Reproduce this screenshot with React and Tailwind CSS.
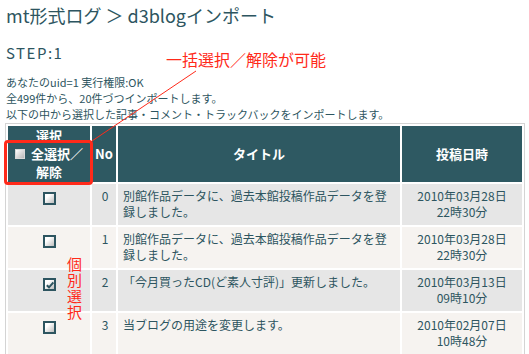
import React from "react";

const C = "text-[#2d5560]";

function Box({ checked }) {
  return (
    <span className="relative inline-block w-[13px] h-[13px] border-2 border-[#2d5560] bg-linear-to-br from-white from-30% to-[#bdbdbd] align-top">
      {checked && (
        <svg className="absolute left-[1px] top-[1px]" width="8" height="8" viewBox="0 0 8 8">
          <path d="M0.8 4.2 L3 6.3 L7.4 1.4" stroke="#2d5560" strokeWidth="2" fill="none" />
        </svg>
      )}
    </span>
  );
}

const rows = [
  { no: 0, title: "別館作品データに、過去本館投稿作品データを登録しました。", d1: "2010年03月28日", d2: "22時30分", bg: "bg-[#e6e6e6]" },
  { no: 1, title: "別館作品データに、過去本館投稿作品データを登録しました。", d1: "2010年03月28日", d2: "22時30分", bg: "bg-[#f6f3f0]" },
  { no: 2, title: "「今月買ったCD(ど素人寸評)」更新しました。", d1: "2010年03月13日", d2: "09時10分", bg: "bg-[#e6e6e6]", checked: true },
  { no: 3, title: "当ブログの用途を変更します。", d1: "2010年02月07日", d2: "10時48分", bg: "bg-[#f6f3f0]" },
];

export default function App() {
  return (
    <div
      className={`relative w-[529px] h-[354px] overflow-hidden bg-white ${C}`}
      style={{ fontFamily: '"Noto Sans CJK JP", "Noto Sans", sans-serif' }}
    >
      <h1 className="pl-[6px] pt-[3px] text-[18px] leading-[24px] font-normal">mt形式ログ ＞ d3blogインポート</h1>
      <div className="pl-[6px] mt-[17px] text-[15px] leading-[18px] tracking-[1.5px]">STEP:1</div>
      <div className="pl-[6px] mt-[12px] text-[11px] leading-[16px]">
        <div>あなたのuid=1 実行権限:OK</div>
        <div>全499件から、20件づつインポートします。</div>
        <div>以下の中から選択した記事・コメント・トラックバックをインポートします。</div>
      </div>
      <table className="ml-[5px] mt-[1px] w-[520px] table-fixed border-separate border-spacing-[2px] border border-[#d4d4d4] text-[12px] leading-[16px]">
        <thead>
          <tr className="bg-[#2e5962] text-white font-bold text-[13px] leading-[18px]">
            <th className="w-[82px] h-[56px] px-[2px] text-center align-middle">
              <div>選択</div>
              <div className="flex items-center justify-center gap-[6px]">
                <span className="inline-block w-[10px] h-[10px] border border-[#d8d8d8] bg-linear-to-br from-white to-[#b8b8b8]" />
                <span>全選択／</span>
              </div>
              <div>解除</div>
            </th>
            <th className="w-[24px] text-center align-middle">No</th>
            <th className="w-[282px] text-center align-middle">タイトル</th>
            <th className="w-[120px] text-center align-middle">投稿日時</th>
          </tr>
        </thead>
        <tbody>
          {rows.map((r) => (
            <tr key={r.no} className={r.bg}>
              <td className="h-[41px] align-top text-center pt-[8px]">
                <Box checked={r.checked} />
              </td>
              <td className="align-top text-center pt-[4px] pl-[2px]">{r.no}</td>
              <td className="align-top pt-[4px] px-[5px]">{r.title}</td>
              <td className="align-top text-center pt-[4px]">
                {r.d1}
                <br />
                {r.d2}
              </td>
            </tr>
          ))}
        </tbody>
      </table>

      <div className="absolute left-[166px] top-[49px] text-[16px] leading-[20px] text-[#ff2a1a]">一括選択／解除が可能</div>
      <svg className="absolute left-0 top-0 pointer-events-none" width="529" height="354">
        <line x1="196" y1="71" x2="92" y2="141" stroke="#ff2a1a" strokeWidth="1" />
      </svg>
      <div className="absolute left-[4px] top-[140px] w-[89px] h-[45px] border-[3px] border-[#ff2a1a] rounded-[4px]" />
      <div className="absolute left-[66px] top-[257px] [writing-mode:vertical-rl] text-[15px] leading-[17px] tracking-[1px] text-[#ff2a1a]">
        個別選択
      </div>
    </div>
  );
}
